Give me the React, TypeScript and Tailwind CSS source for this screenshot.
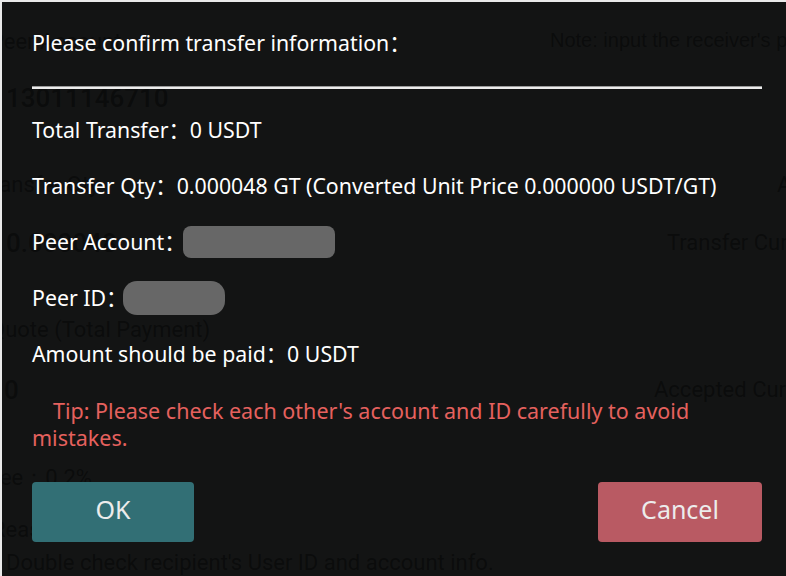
import React from 'react';

function BgRow({ className, left, right, rightAt }: { className: string; left: string; right?: string; rightAt?: string }) {
  return (
    <div className={`flex whitespace-nowrap ${className}`}>
      <span className={`shrink-0 ${rightAt ?? ''}`}>{left}</span>
      {right && <span className="text-[22px] font-normal">{right}</span>}
    </div>
  );
}

function BackgroundPage() {
  return (
    <div className="h-full w-full bg-white text-black font-['Roboto',sans-serif] overflow-hidden">
      <div className="flex mt-[26px] -ml-[12px] h-[28px] leading-[28px] text-[22px] whitespace-nowrap">
        <span className="w-[560px] shrink-0">Peer Account</span>
        <span className="-mt-[2px] text-[20px] font-['Liberation_Sans',sans-serif]">Note: input the receiver's phone number</span>
      </div>
      <BgRow className="mt-[24px] ml-[4px] h-[36px] leading-[36px] text-[26px] font-medium" left="13011146710" />
      <BgRow className="mt-[55px] -ml-[22px] h-[28px] leading-[28px] text-[22px]" left="Transfer Qty" right="Available" rightAt="w-[797px]" />
      <BgRow className="mt-[26px] ml-[4px] h-[36px] leading-[36px] text-[26px] font-medium" left="0.000048" right="Transfer Currency" rightAt="w-[661px]" />
      <BgRow className="mt-[55px] -ml-[12px] h-[28px] leading-[28px] text-[22px]" left="Quote (Total Payment)" />
      <BgRow className="mt-[28px] ml-[2px] h-[36px] leading-[36px] text-[26px] font-medium" left="0" right="Accepted Currency" rightAt="w-[650px]" />
      <BgRow className="mt-[56px] -ml-[14px] h-[28px] leading-[28px] text-[22px]" left="Fee：0.2%" />
      <BgRow className="mt-[24px] -ml-[10px] h-[28px] leading-[28px] text-[22px]" left="Reason" />
      <BgRow className="mt-[5px] ml-[4px] h-[28px] leading-[28px] text-[22px]" left="Double check recipient's User ID and account info." />
    </div>
  );
}

function Row({ label, children }: { label: string; children: React.ReactNode }) {
  return (
    <div className="flex h-[56px] items-center whitespace-nowrap">
      <span>{label}：</span>
      {children}
    </div>
  );
}

export default function App() {
  return (
    <div className="w-[786px] h-[576px] bg-[#e9e9e9] pt-[2px] pl-[2px] overflow-hidden">
      <div className="relative w-full h-full">
        <BackgroundPage />
        {/* dark mask + dialog over the page */}
        <div className="absolute inset-0 bg-[rgba(11,12,12,0.968)] text-white font-['Noto_Sans','Noto_Sans_CJK_SC',sans-serif]">
          <div className="pl-[30px] pr-[24px]">
            <div className="mt-[27px] text-[21.3px] leading-[28px]">Please confirm transfer information：</div>
            <div className="mt-[29px] h-[3px] border-t border-[#9a9a9a] bg-[#ececec]" />
            <div className="mt-[13px] text-[21.3px]">
              <Row label="Total Transfer">
                <span>0 USDT</span>
              </Row>
              <Row label="Transfer Qty">
                <span>0.000048 GT (Converted Unit Price 0.000000 USDT/GT)</span>
              </Row>
              <Row label="Peer Account">
                <span className="ml-[-3px] h-[32px] w-[152px] rounded-[8px] bg-[#676767]" />
              </Row>
              <Row label="Peer ID">
                <span className="ml-[-4px] h-[34px] w-[102px] rounded-[14px] bg-[#676767]" />
              </Row>
              <Row label="Amount should be paid">
                <span>0 USDT</span>
              </Row>
            </div>
            <p className="mt-[15px] indent-[21px] text-[21.5px] leading-[27px] text-[#e5615e]">
              Tip: Please check each other's account and ID carefully to avoid mistakes.
            </p>
            <div className="mt-[31px] flex justify-between">
              <button className="h-[60px] w-[162px] pb-[4px] rounded-[4px] bg-[#326f75] text-[25px] text-[#ececec]">
                OK
              </button>
              <button className="h-[60px] w-[164px] pb-[4px] rounded-[4px] bg-[#b95a63] text-[25px] text-[#ececec]">
                Cancel
              </button>
            </div>
          </div>
        </div>
      </div>
    </div>
  );
}
